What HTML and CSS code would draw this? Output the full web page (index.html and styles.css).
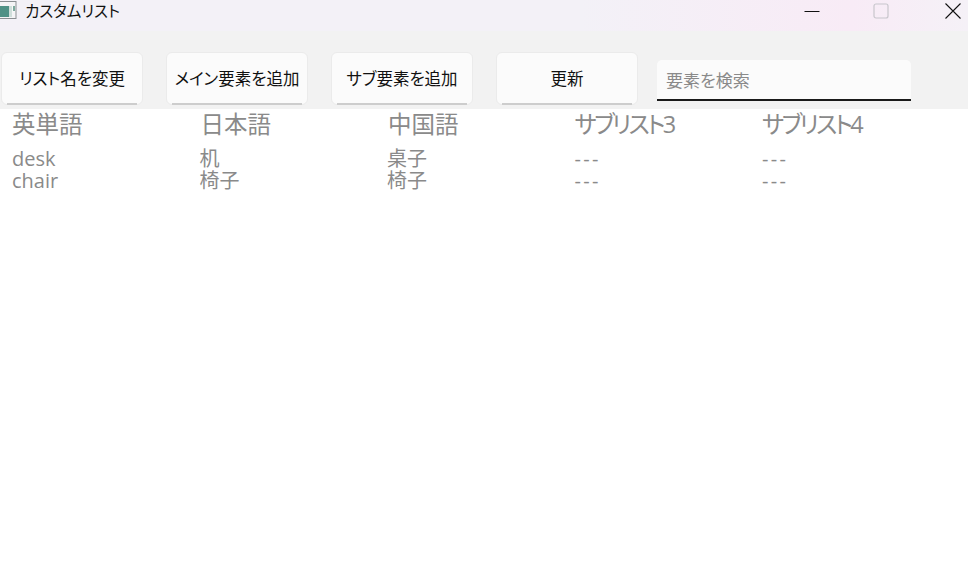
FILE: index.html
```html
<!DOCTYPE html>
<html lang="ja">
<head>
    <meta charset="UTF-8">
    <title>カスタムリスト</title>
    <link rel="stylesheet" href="styles.css">
</head>
<body>

    <div class="titlebar">
        <svg class="app-icon" width="17" height="20" viewBox="0 0 17 20">
            <rect x="-1" y="1.5" width="17" height="17" fill="#f4f4f6" stroke="#8b8f93"/>
            <rect x="0" y="6" width="9" height="11" fill="#4f9186"/>
            <rect x="9" y="6" width="3" height="11" fill="#cfdedb"/>
            <rect x="12" y="6" width="3" height="6" fill="#f7f9f8"/>
            <rect x="13" y="6" width="2" height="5" fill="#7da99e"/>
        </svg>
        <span class="title">カスタムリスト</span>
        <div class="window-buttons">
            <svg class="win-min" width="16" height="16" viewBox="0 0 16 16"><path d="M0.5 8.5h15" stroke="#111" stroke-width="1"/></svg>
            <svg class="win-max" width="16" height="16" viewBox="0 0 16 16"><rect x="1" y="1" width="14" height="14" rx="2" fill="none" stroke="#c8c6cc" stroke-width="1.2"/></svg>
            <svg class="win-close" width="16" height="16" viewBox="0 0 16 16"><path d="M0.5 0.5l15 15M15.5 0.5l-15 15" stroke="#111" stroke-width="1.1"/></svg>
        </div>
    </div>

    <div class="toolbar">
        <button class="tool-button">リスト名を変更</button>
        <button class="tool-button">メイン要素を追加</button>
        <button class="tool-button">サブ要素を追加</button>
        <button class="tool-button">更新</button>
        <input class="search-box" type="text" placeholder="要素を検索">
    </div>

    <div class="list-grid">
        <div class="list-column">
            <h2>英単語</h2>
            <p>desk</p>
            <p>chair</p>
        </div>
        <div class="list-column">
            <h2 class="kanji">日本語</h2>
            <p>机</p>
            <p>椅子</p>
        </div>
        <div class="list-column">
            <h2 class="kanji">中国語</h2>
            <p>桌子</p>
            <p>椅子</p>
        </div>
        <div class="list-column">
            <h2 class="kana">サブリスト3</h2>
            <p class="empty">---</p>
            <p class="empty">---</p>
        </div>
        <div class="list-column">
            <h2 class="kana">サブリスト4</h2>
            <p class="empty">---</p>
            <p class="empty">---</p>
        </div>
    </div>

</body>
</html>
```

FILE: styles.css
```css
html, body {
    height: 100%;
}
body {
    font-family: "Open Sans", "Noto Sans CJK JP", sans-serif;
    font-feature-settings: "palt";
    margin: 0;
    background-color: #fff;
    overflow: hidden;
}
.titlebar {
    display: flex;
    align-items: center;
    height: 22px;
    padding-bottom: 9px;
    background: linear-gradient(90deg, #f3f1f7 0%, #f3f1f7 60%, #f8ebf6 88%, #f5f1f7 100%);
}
.app-icon {
    margin-top: -2px;
}
.title {
    margin: -2px 0 0 8px;
    font-size: 15.5px;
    color: #111;
}
.window-buttons {
    display: flex;
    align-items: center;
    gap: 53px;
    margin-left: auto;
    padding-right: 7px;
}
.win-max {
    margin-right: 3px;
}
.toolbar {
    display: flex;
    align-items: flex-start;
    gap: 23px;
    height: 57px;
    padding: 21px 0 0 1px;
    background-color: #f2f2f2;
}
.tool-button {
    position: relative;
    width: 142px;
    height: 53px;
    padding: 0 0 2px;
    font-family: inherit;
    font-feature-settings: inherit;
    font-size: 16.5px;
    color: #111;
    background-color: #fbfbfb;
    border: 1px solid #ebebeb;
    border-radius: 6px;
}
/* darker line under the button, stops short of the corners */
.tool-button::after {
    content: "";
    position: absolute;
    left: 5px;
    right: 5px;
    bottom: -1px;
    height: 2px;
    background-color: #cdcdcd;
}
.search-box {
    box-sizing: border-box;
    width: 254px;
    height: 41px;
    margin: 8px 0 0 -4px;
    padding: 2px 9px 0;
    font-family: inherit;
    font-feature-settings: inherit;
    font-size: 17px;
    background-color: #fbfbfb;
    border: none;
    border-bottom: 2px solid #1a1a1a;
    border-radius: 5px 5px 0 0;
    outline: none;
}
.search-box::placeholder {
    color: #8a8a8a;
}
.list-grid {
    display: grid;
    grid-template-columns: repeat(5, 187.5px);
    padding: 2px 0 0 12px;
}
.list-column h2 {
    margin: 0 0 11px;
    font-size: 23.5px;
    font-weight: 400;
    line-height: 26px;
    color: #8a8a8a;
}
.list-column .kanji {
    padding-left: 1px;
}
.list-column .kana {
    letter-spacing: -2.6px;
}
.list-column p {
    margin: 0;
    font-size: 20px;
    line-height: 22px;
    color: #8a8a8a;
}
.list-column .empty {
    letter-spacing: 2.3px;
}
```
